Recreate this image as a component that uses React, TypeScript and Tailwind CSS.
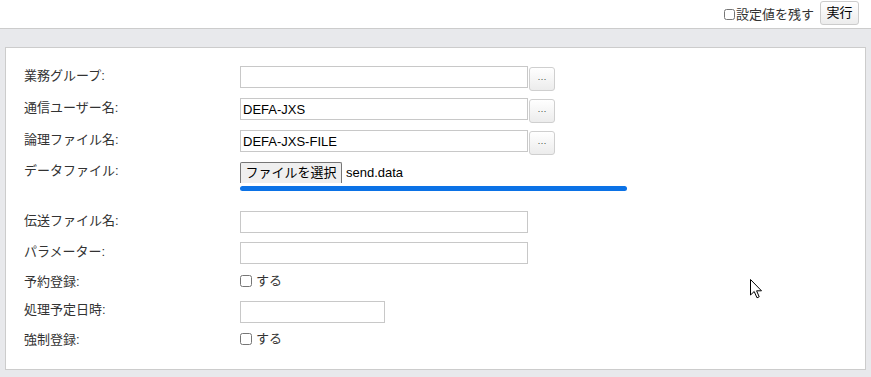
import React from 'react';

const font = { fontFamily: '"Liberation Sans", "Noto Sans CJK JP", sans-serif' };

function Label({ text }: { text: string }) {
  return <div className="w-[216px] shrink-0 text-[13px] text-[#333]">{text}</div>;
}

function TextBox({ value = '', width = 'w-[288px]' }: { value?: string; width?: string }) {
  return (
    <input
      type="text"
      defaultValue={value}
      className={`${width} h-[22px] border border-[#c8c8c8] px-[2px] text-[13px] text-black outline-none`}
    />
  );
}

function DotsButton() {
  return (
    <button className="ml-[1px] w-[26px] h-[24px] mt-[1px] rounded-[3px] border border-[#cfcfcf] bg-gradient-to-b from-white to-[#ececec] text-[9px] leading-none text-[#444]">
      ···
    </button>
  );
}

function Check({ label }: { label: string }) {
  return (
    <label className="flex items-center gap-[4px] text-[13px] text-[#333]">
      <input type="checkbox" className="m-0 w-[12px] h-[12px]" />
      {label}
    </label>
  );
}

export default function App() {
  return (
    <div className="relative w-[871px] h-[377px] flex flex-col bg-[#e8e9ec] overflow-hidden" style={font}>
      {/* header */}
      <div className="h-[29px] shrink-0 bg-white border-b border-[#cccccc] flex items-start justify-end pr-[12px]">
        <label className="flex items-center mt-[5px] text-[13px] text-[#333]">
          <input type="checkbox" className="m-0 mr-[1px] w-[11px] h-[11px]" />
          設定値を残す
        </label>
        <button className="ml-[6px] mt-[1px] w-[39px] h-[24px] rounded-[3px] border border-[#cccccc] bg-gradient-to-b from-white to-[#ececec] text-[13px] text-black">
          実行
        </button>
      </div>

      {/* body */}
      <div className="flex-1 px-[5px] pt-[18px] pb-[7px] flex">
        <div className="flex-1 bg-white border border-[#cccccc] pl-[18px] pt-[18px] flex flex-col">
          <div className="flex items-start h-[22px]">
            <Label text="業務グループ:" />
            <TextBox />
            <DotsButton />
          </div>
          <div className="flex items-start h-[22px] mt-[10px]">
            <Label text="通信ユーザー名:" />
            <TextBox value="DEFA-JXS" />
            <DotsButton />
          </div>
          <div className="flex items-start h-[22px] mt-[10px]">
            <Label text="論理ファイル名:" />
            <TextBox value="DEFA-JXS-FILE" />
            <DotsButton />
          </div>
          <div className="flex items-start mt-[10px]">
            <div className="-mt-[1px]"><Label text="データファイル:" /></div>
            <div className="flex flex-col">
              <div className="flex items-center">
                <button className="w-[102px] h-[21px] border border-b-0 border-[#767676] rounded-t-[2px] bg-[#efefef] text-[13px] text-black">
                  ファイルを選択
                </button>
                <span className="ml-[4px] text-[13px] text-black">send.data</span>
              </div>
              <div className="mt-[3px] w-[387px] h-[5px] rounded-full bg-[#0b72e6]" />
            </div>
          </div>
          <div className="flex items-start h-[22px] mt-[20px]">
            <Label text="伝送ファイル名:" />
            <TextBox />
          </div>
          <div className="flex items-start h-[22px] mt-[9px]">
            <Label text="パラメーター:" />
            <TextBox />
          </div>
          <div className="flex items-center h-[22px] mt-[6px]">
            <div className="mt-[1px]"><Label text="予約登録:" /></div>
            <Check label="する" />
          </div>
          <div className="flex items-start h-[22px] mt-[9px]">
            <div className="-mt-[1px]"><Label text="処理予定日時:" /></div>
            <TextBox width="w-[145px]" />
          </div>
          <div className="flex items-center h-[20px] mt-[6px]">
            <div className="mt-[1px]"><Label text="強制登録:" /></div>
            <Check label="する" />
          </div>
        </div>
      </div>

      {/* mouse pointer */}
      <svg className="absolute left-[750px] top-[279px]" width="13" height="20" viewBox="0 0 13 20">
        <path d="M0.5 0.5 L0.5 16 L4.2 12.5 L7 18.8 L9.2 17.8 L6.6 11.8 L11.5 11.8 Z" fill="white" stroke="black" strokeWidth="1" strokeLinejoin="miter" />
      </svg>
    </div>
  );
}
